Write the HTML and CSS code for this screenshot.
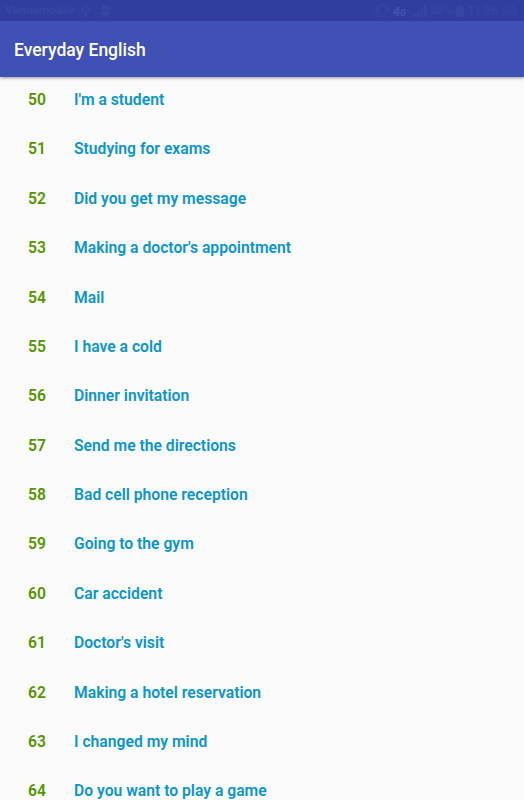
FILE: index.html
```
<!DOCTYPE html>
<html lang="en">
<head>
    <meta charset="utf-8">
    <meta name="viewport" content="width=device-width, initial-scale=1.0">
    <title>Everyday English</title>
    <link rel="stylesheet" href="styles.css">
</head>
<body>
    <header class="top">
        <div class="status-bar">
            <span class="carrier">Vietnamobile</span>
            <svg class="icon-usb" width="10" height="14" viewBox="0 0 10 14" fill="none" stroke="currentColor" stroke-width="1.2">
                <path d="M5 1v11M1.5 5v2.5L5 10M8.5 4v2.5L5 9"/>
                <path d="M5 0l2 3H3zM0.5 4h2v2h-2zM7.5 3h2v2h-2zM4 11h2v2H4z" fill="currentColor" stroke="none"/>
            </svg>
            <svg class="icon-debug" width="12" height="12" viewBox="0 0 12 12" fill="currentColor">
                <path d="M3 0h6l1 3h1v1H1V3h1zM1 5h10v1H1zM2 7h8v1h2v1H9.5L8 11.5H4L2.5 9H0V8h2z"/>
            </svg>
            <span class="spacer"></span>
            <svg class="icon-vibrate" width="16" height="13" viewBox="0 0 16 13" fill="none" stroke="currentColor" stroke-width="1.2">
                <rect x="4.5" y="0.7" width="7" height="11.6" rx="1"/>
                <path d="M2.5 3v7M0.6 5v3M13.5 3v7M15.4 5v3"/>
            </svg>
            <span class="network"><span class="network-digit">4</span>G</span>
            <svg class="icon-signal" width="13" height="13" viewBox="0 0 13 13" fill="currentColor">
                <path d="M0 10h2v3H0zM3.5 7h2v6h-2zM7 4h2v9H7zM10.5 0.5h2V13h-2z"/>
            </svg>
            <span class="battery-level">88%</span>
            <svg class="icon-battery" width="8" height="12" viewBox="0 0 8 12" fill="currentColor">
                <path d="M2.500 0h3v1.300H8V12H0V1.300h2.500z"/>
            </svg>
            <span class="clock">11:36 SA</span>
        </div>
        <div class="toolbar">
            <h1 class="title">Everyday English</h1>
        </div>
    </header>
    <ul class="lessons">
        <li class="lesson"><span class="number">50</span><span class="name">I'm a student</span></li>
        <li class="lesson"><span class="number">51</span><span class="name">Studying for exams</span></li>
        <li class="lesson"><span class="number">52</span><span class="name">Did you get my message</span></li>
        <li class="lesson"><span class="number">53</span><span class="name">Making a doctor's appointment</span></li>
        <li class="lesson"><span class="number">54</span><span class="name">Mail</span></li>
        <li class="lesson"><span class="number">55</span><span class="name">I have a cold</span></li>
        <li class="lesson"><span class="number">56</span><span class="name">Dinner invitation</span></li>
        <li class="lesson"><span class="number">57</span><span class="name">Send me the directions</span></li>
        <li class="lesson"><span class="number">58</span><span class="name">Bad cell phone reception</span></li>
        <li class="lesson"><span class="number">59</span><span class="name">Going to the gym</span></li>
        <li class="lesson"><span class="number">60</span><span class="name">Car accident</span></li>
        <li class="lesson"><span class="number">61</span><span class="name">Doctor's visit</span></li>
        <li class="lesson"><span class="number">62</span><span class="name">Making a hotel reservation</span></li>
        <li class="lesson"><span class="number">63</span><span class="name">I changed my mind</span></li>
        <li class="lesson"><span class="number">64</span><span class="name">Do you want to play a game</span></li>
    </ul>
</body>
</html>
```
FILE: styles.css
```
* {
    box-sizing: border-box;
}
body {
    display: flex;
    flex-direction: column;
    height: 100vh;
    margin: 0;
    overflow: hidden;
    background: #fafafa;
    font-family: Roboto, "Liberation Sans", sans-serif;
}
.top {
    position: relative;
    z-index: 1;
    flex: none;
    box-shadow: 0 1px 3px rgba(0, 0, 0, 0.4);
}
.status-bar {
    display: flex;
    align-items: center;
    height: 21px;
    padding: 0 7px 0 5px;
    background: #303f9f;
    color: #3846a3;
    font-size: 12px;
    line-height: 21px;
    white-space: nowrap;
}
.carrier {
    width: 76px;
    font-size: 11.8px;
    font-weight: 700;
}
.icon-debug {
    margin-left: 8px;
}
.spacer {
    flex: 1;
}
.network {
    margin: 3px 8px 0 3px;
    color: #4050ae;
    font-size: 9px;
    font-style: italic;
    font-weight: 900;
}
.network-digit {
    font-size: 13px;
}
.battery-level {
    margin: 0 4px 0 3px;
}
.clock {
    margin-left: 3px;
    font-size: 12.5px;
}
.toolbar {
    display: flex;
    align-items: center;
    height: 56px;
    padding: 1px 14px 0;
    background: #3f51b5;
}
.title {
    margin: 0;
    color: #fff;
    font-size: 17.5px;
    font-weight: 500;
}

/* the list is scrolled a little under the toolbar */
.lessons {
    flex: 1;
    min-height: 0;
    margin: -2.2px 0 0;
    padding: 0;
    list-style: none;
}
.lesson {
    display: flex;
    align-items: center;
    height: 49.38px;
    padding-left: 28px;
    font-size: 15.7px;
    font-weight: 600;
}
.number {
    width: 46px;
    color: #539600;
}
.name {
    color: #0c94cc;
}
```
